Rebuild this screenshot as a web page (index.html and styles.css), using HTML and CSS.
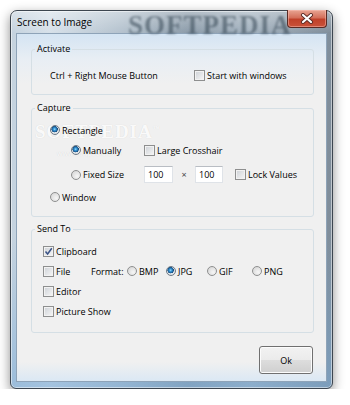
FILE: index.html
```html
<!doctype html>
<html lang="en">
<head>
    <meta charset="UTF-8">
    <title>Screen to Image</title>
    <link rel="stylesheet" href="styles.css">
</head>
<body>
<div class="window">
    <div class="titlebar">
        <span class="title">Screen to Image</span>
        <span class="mark">SOFTPEDIA</span>
        <span class="close">
            <svg width="14" height="11" viewBox="0 0 14 11">
                <path d="M3 2 L11 9 M11 2 L3 9" stroke="#5b2a24" stroke-width="4" stroke-linecap="round"/>
                <path d="M3 2 L11 9 M11 2 L3 9" stroke="#fff" stroke-width="2.2" stroke-linecap="round"/>
            </svg>
        </span>
    </div>
    <div class="client">
        <fieldset class="group">
            <legend>Activate</legend>
            <div class="body activate">
                <span class="hotkey">Ctrl + Right Mouse Button</span>
                <label class="opt"><i class="box"></i>Start with windows</label>
            </div>
        </fieldset>

        <fieldset class="group">
            <legend>Capture</legend>
            <div class="body capture">
                <span class="wm">SOFTPEDIA<sup>™</sup></span>
                <span class="wm-url">www.softpedia.com</span>
                <div class="row top">
                    <label class="opt"><i class="dot on"></i>Rectangle</label>
                </div>
                <div class="row sub">
                    <label class="opt first"><i class="dot on"></i>Manually</label>
                    <label class="opt"><i class="box"></i>Large Crosshair</label>
                </div>
                <div class="row sub size">
                    <label class="opt first"><i class="dot"></i>Fixed Size</label>
                    <input class="num" type="text" value="100">
                    <span class="times">×</span>
                    <input class="num" type="text" value="100">
                    <label class="opt lock"><i class="box"></i>Lock Values</label>
                </div>
                <div class="row top win">
                    <label class="opt"><i class="dot"></i>Window</label>
                </div>
            </div>
        </fieldset>

        <fieldset class="group">
            <legend>Send To</legend>
            <div class="body send">
                <div class="row">
                    <label class="opt"><i class="box checked">
                        <svg width="9" height="9" viewBox="0 0 9 9"><path d="M1.5 4.5 L3.6 7 L7.8 1.2" fill="none" stroke="#3c5487" stroke-width="1.5"/></svg>
                    </i>Clipboard</label>
                </div>
                <div class="row">
                    <label class="opt file"><i class="box"></i>File</label>
                    <span class="fmt">Format:</span>
                    <label class="opt w39"><i class="dot"></i>BMP</label>
                    <label class="opt w41"><i class="dot on"></i>JPG</label>
                    <label class="opt w45"><i class="dot"></i>GIF</label>
                    <label class="opt"><i class="dot"></i>PNG</label>
                </div>
                <div class="row">
                    <label class="opt"><i class="box"></i>Editor</label>
                </div>
                <div class="row">
                    <label class="opt"><i class="box"></i>Picture Show</label>
                </div>
            </div>
        </fieldset>

        <button class="ok">Ok</button>
    </div>
</div>
</body>
</html>
```

FILE: styles.css
```css
* {
    margin: 0;
    padding: 0;
    box-sizing: border-box;
}

body {
    background: #fff;
    font-family: "Open Sans", "Liberation Sans", sans-serif;
    font-size: 9px;
    color: #000;
}

.window {
    width: 323px;
    height: 379px;
    margin: 10px 0 0 10px;
    border: 1px solid #3d4650;
    border-radius: 7px 7px 6px 6px;
    padding: 0 5px 6px;
    display: flex;
    flex-direction: column;
    background:
        linear-gradient(to bottom, rgba(255, 255, 255, 0.35), rgba(255, 255, 255, 0) 22px, rgba(255, 255, 255, 0) 60%, rgba(120, 170, 215, 0.55) 100%),
        linear-gradient(to right, #c4d2de 0, #d6e0e9 12%, #b3c1cd 35%, #8c9caa 55%, #a3b2bf 75%, #7f8d9a 100%);
    box-shadow: 0 4px 12px rgba(0, 0, 0, 0.45), inset 0 0 0 1px rgba(255, 255, 255, 0.5);
}

/* title bar */
.titlebar {
    height: 22px;
    display: flex;
    align-items: center;
    justify-content: space-between;
    position: relative;
}

.title {
    padding-left: 1px;
    font-size: 10px;
    position: relative;
    z-index: 1;
}

.mark {
    position: absolute;
    left: 112px;
    top: -1px;
    font-family: "Liberation Serif", serif;
    font-weight: bold;
    font-size: 27px;
    letter-spacing: 1px;
    color: rgba(40, 58, 72, 0.5);
    filter: blur(1.3px);
}

.close {
    align-self: flex-start;
    margin-top: -1px;
    width: 40px;
    height: 18px;
    border: 1px solid #5a2a24;
    border-top: 0;
    border-radius: 0 0 4px 4px;
    background: linear-gradient(to bottom, #e8a593 0, #d4705b 45%, #c0412a 55%, #c9523a 100%);
    box-shadow: inset 0 0 0 1px rgba(255, 200, 190, 0.45);
    display: flex;
    align-items: center;
    justify-content: center;
    position: relative;
    z-index: 1;
}

/* client area */
.client {
    width: 311px;
    height: 349px;
    border: 1px solid #8ea3b8;
    display: flex;
    flex-direction: column;
    background: linear-gradient(to bottom, #d4e4f3 0, #e8eef4 25px, #f0f0f0 50px, #f0f0f0 328px, #dbe8f4 100%);
}

.group {
    width: 283px;
    margin: 8px 0 0 14px;
    border: 1px solid #d5dfe5;
    border-radius: 3px;
    min-width: 0;
}

.group + .group {
    margin-top: 6px;
}

.group:nth-of-type(3) {
    margin-top: 5px;
}

.group legend {
    margin-left: 3px;
    padding: 0 2px;
    line-height: 14px;
}

.body {
    position: relative;
}

.activate {
    height: 38px;
    display: flex;
    align-items: center;
    padding-left: 18px;
}

.hotkey {
    width: 144px;
}

.capture {
    height: 101px;
    padding-top: 5px;
}

.send {
    height: 96px;
    padding-top: 5px;
    padding-left: 11px;
}

.row {
    height: 20px;
    display: flex;
    align-items: center;
    position: relative;
    z-index: 1;
}

.row.top {
    padding-left: 18px;
}

.row.sub {
    padding-left: 39px;
}

.row.size {
    height: 21px;
    margin-top: 4px;
}

.row.win {
    margin-top: 2px;
}

.opt {
    display: flex;
    align-items: center;
    white-space: nowrap;
}

.opt.first {
    width: 73px;
}

.opt.lock {
    margin-left: 12px;
}

.opt.file {
    width: 48px;
}

.fmt {
    width: 36px;
}

.w39 { width: 39px; }
.w41 { width: 41px; }
.w45 { width: 45px; }

/* check boxes */
.box {
    width: 11px;
    height: 11px;
    margin-right: 2px;
    flex: none;
    border: 1px solid #8e8f8f;
    background: linear-gradient(135deg, #cdd1d6, #f7f7f7);
    box-shadow: inset 0 0 0 1px #f2f2f2;
    display: flex;
    align-items: center;
    justify-content: center;
}

/* radio buttons */
.dot {
    width: 10px;
    height: 10px;
    margin-right: 2px;
    flex: none;
    border: 1px solid #8e8f8f;
    border-radius: 50%;
    background: radial-gradient(circle at 65% 65%, #f6f6f6 0, #dcdcdc 70%, #cfcfcf 100%);
}

.dot.on {
    border-color: #6e7a86;
    background: radial-gradient(circle at 45% 40%, #9ee0ff 0, #3a9ad8 1.2px, #1b5f9a 2.6px, #1b4d7a 3px, #e4e8ec 3.4px, #d2d6da 100%);
}

.num {
    width: 29px;
    height: 17px;
    border: 1px solid #dfe3e8;
    border-top-color: #b9bdc3;
    background: #fff;
    font: inherit;
    padding: 0 3px;
    outline: none;
}

.num + .times + .num {
    width: 28px;
}

.times {
    width: 22px;
    text-align: center;
    color: #444;
}

/* watermark, drawn behind the rows */
.wm {
    position: absolute;
    left: 3px;
    top: 6px;
    font-family: "Liberation Serif", serif;
    font-weight: bold;
    font-size: 19px;
    letter-spacing: 1px;
    color: rgba(255, 255, 255, 0.9);
    text-shadow: 0 0 1px rgba(0, 0, 0, 0.12);
}

.wm sup {
    font-size: 7px;
}

.wm-url {
    position: absolute;
    left: 25px;
    top: 34px;
    font-size: 7px;
    color: rgba(255, 255, 255, 0.9);
    text-shadow: 0 0 1px rgba(0, 0, 0, 0.15);
}

.ok {
    width: 54px;
    height: 28px;
    margin: 13px 13px 0 auto;
    border: 1px solid #707070;
    border-radius: 3px;
    font: inherit;
    background: linear-gradient(to bottom, #f2f2f2 0, #ebebeb 50%, #dddddd 51%, #cfcfcf 100%);
    box-shadow: inset 0 0 0 1px #fcfcfc;
    color: #000;
}
```
